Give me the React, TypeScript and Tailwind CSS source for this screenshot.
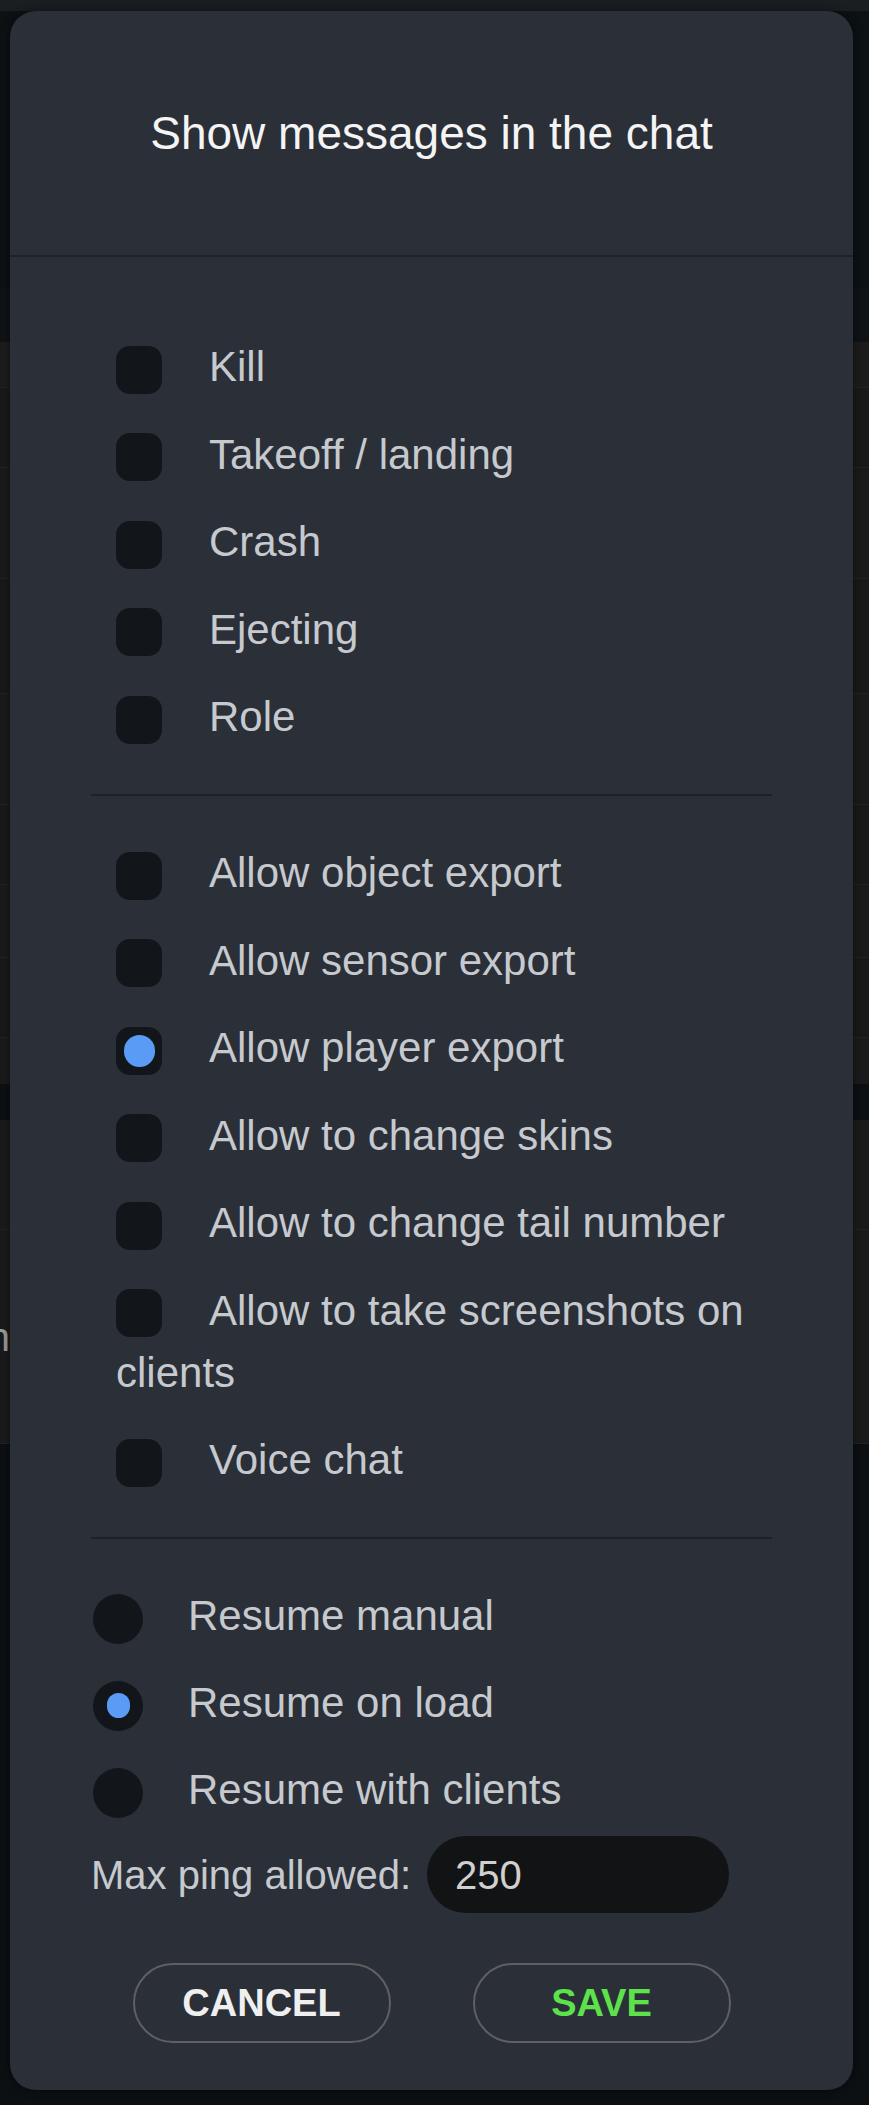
const chatEvents = ['Kill', 'Takeoff / landing', 'Crash', 'Ejecting', 'Role']

const permissions = [
  { label: 'Allow object export', on: false },
  { label: 'Allow sensor export', on: false },
  { label: 'Allow player export', on: true },
  { label: 'Allow to change skins', on: false },
  { label: 'Allow to change tail number', on: false },
  { label: 'Allow to take screenshots on clients', on: false },
  { label: 'Voice chat', on: false },
]

const resumeModes = [
  { label: 'Resume manual', on: false },
  { label: 'Resume on load', on: true },
  { label: 'Resume with clients', on: false },
]

// the table that sits behind the dialog, only its edges show
const backdropRows = [
  { h: 11, c: 'bg-[#1b1e21]' },
  { h: 277, c: 'bg-[#0c1114]' },
  { h: 54, c: 'bg-[#0f1316]' },
  { h: 46, c: 'bg-[#1c1c1c] border-b border-[#232323]' },
  { h: 80, c: 'bg-[#191919] border-b border-[#222222]' },
  { h: 111, c: 'bg-[#1a1a1a] border-b border-[#222222]' },
  { h: 115, c: 'bg-[#191919] border-b border-[#222222]' },
  { h: 111, c: 'bg-[#1a1a1a] border-b border-[#222222]' },
  { h: 80, c: 'bg-[#191919] border-b border-[#222222]' },
  { h: 73, c: 'bg-[#1a1a1a] border-b border-[#222222]' },
  { h: 80, c: 'bg-[#191919] border-b border-[#222222]' },
  { h: 46, c: 'bg-[#1a1a1a]' },
  { h: 36, c: 'bg-[#0c1013]' },
  { h: 110, c: 'bg-[#1a1a1a] border-b border-[#222222]' },
]

export default function App() {
  return (
    <div className="relative w-[869px] h-[2105px] bg-[#0c1013] overflow-hidden font-['Liberation_Sans',Arial,sans-serif]">
      <div className="flex flex-col">
        {backdropRows.map((r, i) => (
          <div key={i} className={r.c} style={{ height: r.h }} />
        ))}
        <div className="h-[214px] bg-[#1a1a1a] border-b border-[#222222] flex items-center">
          <div className="w-[10px] overflow-hidden flex justify-end text-[40px] leading-none text-[#9a9a9a]">
            <span>n</span>
          </div>
        </div>
      </div>

      <section className="absolute left-[10px] top-[11px] w-[843px] rounded-[26px] bg-[#2a2f38] shadow-[0_0_8px_rgba(0,0,0,0.5)]">
        <header className="h-[246px] flex items-center justify-center border-b-2 border-[#1e2229]">
          <h1 className="text-[46px] text-[#f4f4f4] leading-none">
            Show messages in the chat
          </h1>
        </header>

        <div className="px-[81px] pt-[79px] pb-[47px] text-[42px] text-[#c6c9ce]">
          <div className="flex flex-col gap-[25.5px]">
            {chatEvents.map((label) => (
              <CheckRow key={label} label={label} checked={false} />
            ))}
          </div>

          <div className="my-[46px] h-[2px] bg-[#1e2228]" />

          <div className="flex flex-col gap-[25.5px]">
            {permissions.map((p) => (
              <CheckRow key={p.label} label={p.label} checked={p.on} />
            ))}
          </div>

          <div className="my-[46px] h-[2px] bg-[#1e2228]" />

          <div className="flex flex-col gap-[25px]">
            {resumeModes.map((r) => (
              <RadioRow key={r.label} label={r.label} checked={r.on} />
            ))}
          </div>

          <div className="mt-[15px] flex items-center">
            <span className="shrink-0 w-[336px] text-[40px] leading-none whitespace-nowrap">
              Max ping allowed:
            </span>
            <div className="w-[302px] h-[77px] rounded-full bg-[#111315] pl-[28px] flex items-center text-[40px] text-[#d0d0d0]">
              250
            </div>
          </div>

          <div className="mt-[50px] flex justify-center gap-[82px]">
            <button className="w-[258px] h-[80px] rounded-full border-2 border-[#5e6062] text-[38px] font-bold text-[#efefef]">
              CANCEL
            </button>
            <button className="w-[258px] h-[80px] rounded-full border-2 border-[#5e6062] text-[38px] font-bold text-[#5ee24c]">
              SAVE
            </button>
          </div>
        </div>
      </section>
    </div>
  )
}

function CheckRow({ label, checked }: { label: string; checked: boolean }) {
  return (
    <div className="ml-[25px] leading-[62px]">
      <span className="inline-flex items-center justify-center w-[46px] h-[48px] rounded-[14px] bg-[#12161a] align-middle mr-[47px]">
        {checked && <span className="w-[31px] h-[32px] rounded-full bg-[#5a9bf6]" />}
      </span>
      {label}
    </div>
  )
}

function RadioRow({ label, checked }: { label: string; checked: boolean }) {
  return (
    <div className="ml-[2px] leading-[62px]">
      <span className="inline-flex items-center justify-center w-[50px] h-[50px] rounded-full bg-[#12161a] align-middle mr-[45px]">
        {checked && <span className="w-[23px] h-[25px] rounded-full bg-[#5a9bf6]" />}
      </span>
      {label}
    </div>
  )
}
